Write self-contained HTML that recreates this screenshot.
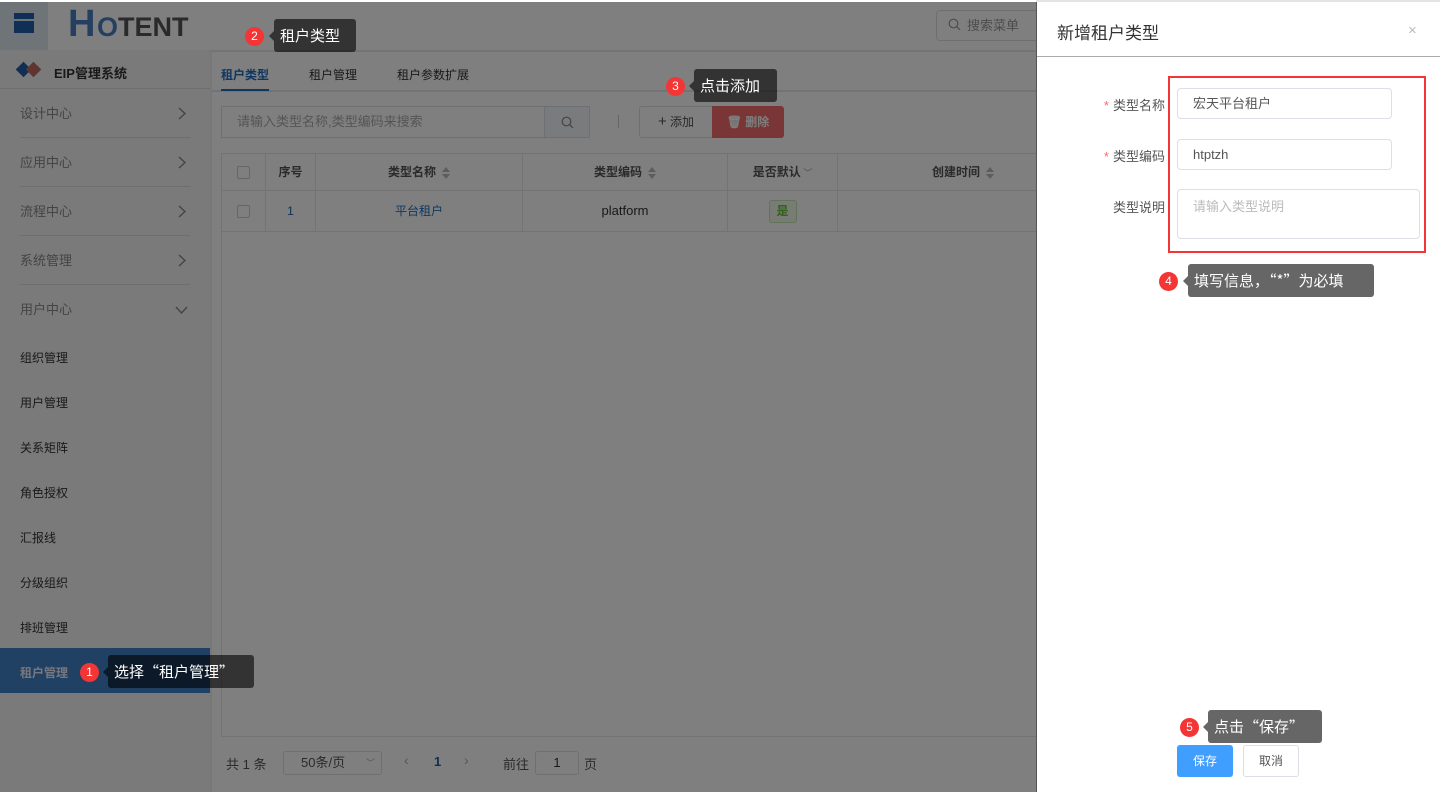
<!DOCTYPE html>
<html><head><meta charset="utf-8"><style>
*{box-sizing:border-box;margin:0;padding:0}
body{width:1440px;height:792px;overflow:hidden;position:relative;background:#fff;font-family:"Liberation Sans","Noto Sans CJK SC",sans-serif;font-size:12px;color:#333}
.a{position:absolute}
.side{left:0;top:50px;width:210px;height:742px;background:#f4f4f4}
.mi{position:absolute;left:20px;width:170px;color:#888;font-size:13px;height:49px;line-height:49px;border-bottom:1px solid #ddd}
.mi svg{position:absolute;right:4px;top:18px}
.si{position:absolute;left:20px;color:#333;font-size:12px}
.th{position:absolute;top:153px;height:38px;line-height:38px;text-align:center;font-weight:bold;color:#555;border-right:1px solid #e6e6e6}
.tr{position:absolute;top:191px;height:40px;line-height:40px;text-align:center;border-right:1px solid #e6e6e6}
.cb{display:inline-block;width:13px;height:13px;border:1px solid #ccc;border-radius:2px;background:#fff;vertical-align:middle}
.sort{display:inline-block;vertical-align:middle;margin-left:6px;width:8px;height:12px;position:relative}
.sort:before{content:"";position:absolute;top:0;left:0;border:4px solid transparent;border-bottom:5px solid #bbb;border-top:0}
.sort:after{content:"";position:absolute;bottom:0;left:0;border:4px solid transparent;border-top:5px solid #bbb;border-bottom:0}
.ov{left:0;top:0;width:1036px;height:792px;background:rgba(0,0,0,.5)}
.tip{position:absolute;background:rgba(0,0,0,.6);color:#fff;font-family:"Noto Sans CJK SC",sans-serif;font-size:15px;height:33px;line-height:33px;padding:0 6px;border-radius:3px;white-space:nowrap}
.tip:before{content:"";position:absolute;left:-5px;top:12px;border:5px solid transparent;border-right-color:rgba(0,0,0,.6);border-left:0}
.bd{position:absolute;width:19px;height:19px;border-radius:50%;background:#f33535;color:#fff;text-align:center;line-height:19px;font-size:12px}
.inp{position:absolute;border:1px solid #dcdfe6;border-radius:4px;background:#fff;font-size:13px;padding-left:15px;color:#555}
.lbl{position:absolute;right:275px;font-size:13px;color:#555}
.lbl b{color:#f56c6c;font-weight:normal;margin-right:4px}
</style></head><body>
<div class="a" style="left:0;top:0;width:1440px;height:1px;background:#fff"></div>
<div class="a" style="left:0;top:1px;width:48px;height:49px;background:#dfe8f2"></div>
<div class="a" style="left:14px;top:13px;width:20px;height:20px;background:#1f5ea8;border-top:4px solid #1f5ea8"><div style="margin-top:2px;height:2px;background:#dfe8f2"></div></div>
<div class="a" style="left:68px;top:4px;font-size:38px;font-weight:bold;color:#4a7fc0;line-height:40px">H</div>
<div class="a" style="left:97px;top:12px;font-size:27px;font-weight:bold;color:#555;letter-spacing:0px"><span style="color:#4a7fc0">O</span>TENT</div>
<div class="a" style="left:936px;top:10px;width:110px;height:31px;border:1px solid #ddd;border-radius:4px;color:#999;font-size:13px;line-height:29px;padding-left:30px">搜索菜单</div>
<svg class="a" style="left:948px;top:18px" width="13" height="13" viewBox="0 0 13 13"><circle cx="5.5" cy="5.5" r="4.3" fill="none" stroke="#999" stroke-width="1.2"/><path d="M8.7 8.7L12 12" stroke="#999" stroke-width="1.2"/></svg>
<div class="a" style="left:0;top:50px;width:1036px;height:2px;background:#e8e8e8"></div>
<div class="a side"></div>
<div class="a" style="left:18px;top:64px;width:11px;height:11px;background:#1f5ea8;transform:rotate(45deg)"></div>
<div class="a" style="left:28px;top:64px;width:11px;height:11px;background:#c0695e;transform:rotate(45deg)"></div>
<div class="a" style="left:54px;top:63px;font-size:13px;font-weight:bold;color:#333">EIP管理系统</div>
<div class="a" style="left:0;top:88px;width:210px;height:1px;background:#ddd"></div>
<div class="mi" style="top:89px">设计中心<svg width="8" height="13"><path d="M1 1l6 5.5L1 12" fill="none" stroke="#888" stroke-width="1.4"/></svg></div>
<div class="mi" style="top:138px">应用中心<svg width="8" height="13"><path d="M1 1l6 5.5L1 12" fill="none" stroke="#888" stroke-width="1.4"/></svg></div>
<div class="mi" style="top:187px">流程中心<svg width="8" height="13"><path d="M1 1l6 5.5L1 12" fill="none" stroke="#888" stroke-width="1.4"/></svg></div>
<div class="mi" style="top:236px">系统管理<svg width="8" height="13"><path d="M1 1l6 5.5L1 12" fill="none" stroke="#888" stroke-width="1.4"/></svg></div>
<div class="mi" style="top:285px;border:0">用户中心<svg width="13" height="8" style="top:21px;right:2px"><path d="M1 1l5.5 6L12 1" fill="none" stroke="#888" stroke-width="1.4"/></svg></div>
<div class="si" style="top:349px">组织管理</div>
<div class="si" style="top:394px">用户管理</div>
<div class="si" style="top:439px">关系矩阵</div>
<div class="si" style="top:484px">角色授权</div>
<div class="si" style="top:529px">汇报线</div>
<div class="si" style="top:574px">分级组织</div>
<div class="si" style="top:619px">排班管理</div>
<div class="a" style="left:0;top:648px;width:210px;height:45px;background:#4181c8"></div>
<div class="si" style="top:664px;color:#eef;font-weight:bold">租户管理</div>
<div class="a" style="left:210px;top:52px;width:2px;height:740px;background:#eee"></div>
<div class="a" style="left:221px;top:66px;font-size:12px;color:#1f6fc0;font-weight:bold">租户类型</div>
<div class="a" style="left:309px;top:66px;font-size:12px;color:#333">租户管理</div>
<div class="a" style="left:397px;top:66px;font-size:12px;color:#333">租户参数扩展</div>
<div class="a" style="left:212px;top:90px;width:824px;height:2px;background:#e4e7ed"></div>
<div class="a" style="left:221px;top:89px;width:48px;height:2px;background:#1f6fc0"></div>
<div class="a" style="left:221px;top:106px;width:324px;height:32px;border:1px solid #dcdfe6;color:#aaa;font-size:13px;line-height:30px;padding-left:15px;background:#fff">请输入类型名称,类型编码来搜索</div>
<div class="a" style="left:544px;top:106px;width:46px;height:32px;border:1px solid #dcdfe6;background:#f5f7fa"></div>
<svg class="a" style="left:561px;top:116px" width="13" height="13"><circle cx="5.5" cy="5.5" r="4.3" fill="none" stroke="#888" stroke-width="1.2"/><path d="M8.7 8.7L12 12" stroke="#888" stroke-width="1.2"/></svg>
<div class="a" style="left:618px;top:115px;width:1px;height:13px;background:#ccc"></div>
<div class="a" style="left:639px;top:106px;width:74px;height:32px;border:1px solid #dcdfe6;border-radius:3px 0 0 3px;background:#fff;font-size:12px;line-height:30px;text-align:center;color:#555"><span style="font-size:15px">+</span> 添加</div>
<div class="a" style="left:712px;top:106px;width:72px;height:32px;background:#f56c6c;border-radius:0 3px 3px 0;font-size:12px;line-height:32px;text-align:center;color:#fff;font-weight:bold">&#x1F5D1;&#xFE0E; 删除</div>
<div class="a" style="left:221px;top:153px;width:815px;height:584px;border:1px solid #e6e6e6;border-right:0"></div>
<div class="a" style="left:221px;top:190px;width:815px;height:1px;background:#e6e6e6"></div>
<div class="a" style="left:221px;top:231px;width:815px;height:1px;background:#e6e6e6"></div>
<div class="th" style="left:221px;width:45px"><span class="cb"></span></div>
<div class="th" style="left:266px;width:50px">序号</div>
<div class="th" style="left:316px;width:207px">类型名称<span class="sort"></span></div>
<div class="th" style="left:523px;width:205px">类型编码<span class="sort"></span></div>
<div class="th" style="left:728px;width:110px">是否默认<span style="font-size:9px;color:#999;font-weight:normal"> ﹀</span></div>
<div class="th" style="left:838px;width:250px;border:0">创建时间<span class="sort"></span></div>
<div class="tr" style="left:221px;width:45px"><span class="cb"></span></div>
<div class="tr" style="left:266px;width:50px;color:#1f5ea8">1</div>
<div class="tr" style="left:316px;width:207px;color:#1f6fc0">平台租户</div>
<div class="tr" style="left:523px;width:205px;font-size:13px">platform</div>
<div class="tr" style="left:728px;width:110px"><span style="display:inline-block;width:28px;height:23px;line-height:21px;background:#f0f9eb;border:1px solid #c2e7b0;color:#67c23a;border-radius:3px;font-weight:bold">是</span></div>
<div class="a" style="left:226px;top:754px;font-size:13px;color:#555">共 1 条</div>
<div class="a" style="left:283px;top:751px;width:99px;height:24px;border:1px solid #dcdfe6;border-radius:3px;font-size:13px;line-height:22px;padding-left:17px;color:#555">50条/页<span style="position:absolute;right:6px;color:#aaa;font-size:9px">﹀</span></div>
<div class="a" style="left:404px;top:752px;color:#aaa;font-size:14px">‹</div>
<div class="a" style="left:434px;top:754px;color:#1f5ea8;font-weight:bold;font-size:13px">1</div>
<div class="a" style="left:464px;top:752px;color:#aaa;font-size:14px">›</div>
<div class="a" style="left:503px;top:754px;font-size:13px;color:#555">前往</div>
<div class="a" style="left:535px;top:751px;width:44px;height:24px;border:1px solid #dcdfe6;border-radius:3px;text-align:center;line-height:22px;font-size:13px">1</div>
<div class="a" style="left:584px;top:754px;font-size:13px;color:#555">页</div>
<div class="a ov"></div>
<div class="a" style="left:0;top:0;width:1036px;height:2px;background:#fff"></div>
<div class="a" style="left:1036px;top:0;width:404px;height:792px;background:#fff;border-left:1px solid #555"></div>
<div class="a" style="left:1036px;top:0;width:404px;height:2px;background:#e4e4e4"></div>
<div class="a" style="left:1057px;top:23px;font-size:17px;color:#333;line-height:22px">新增租户类型</div>
<div class="a" style="left:1408px;top:22px;font-size:15px;color:#bbb">×</div>
<div class="a" style="left:1037px;top:56px;width:403px;height:1px;background:#aaa"></div>
<div class="lbl" style="top:95px"><b>*</b>类型名称</div>
<div class="lbl" style="top:146px"><b>*</b>类型编码</div>
<div class="lbl" style="top:197px">类型说明</div>
<div class="inp" style="left:1177px;top:88px;width:215px;height:31px;line-height:29px">宏天平台租户</div>
<div class="inp" style="left:1177px;top:139px;width:215px;height:31px;line-height:29px">htptzh</div>
<div class="inp" style="left:1177px;top:189px;width:243px;height:50px;padding-top:6px;color:#bbb">请输入类型说明</div>
<div class="a" style="left:1168px;top:76px;width:258px;height:177px;border:2px solid #f33535"></div>
<div class="a" style="left:1177px;top:745px;width:56px;height:32px;background:#409eff;border-radius:3px;color:#fff;text-align:center;line-height:32px;font-size:12px">保存</div>
<div class="a" style="left:1243px;top:745px;width:56px;height:32px;border:1px solid #dcdfe6;border-radius:3px;color:#555;text-align:center;line-height:30px;font-size:12px">取消</div>
<div class="bd" style="left:80px;top:663px">1</div>
<div class="tip" style="left:108px;top:655px;width:146px">选择“租户管理”</div>
<div class="bd" style="left:245px;top:27px">2</div>
<div class="tip" style="left:274px;top:19px;width:82px">租户类型</div>
<div class="bd" style="left:666px;top:77px">3</div>
<div class="tip" style="left:694px;top:69px;width:83px">点击添加</div>
<div class="bd" style="left:1159px;top:272px">4</div>
<div class="tip" style="left:1188px;top:264px;width:186px">填写信息，“*”为必填</div>
<div class="bd" style="left:1180px;top:718px">5</div>
<div class="tip" style="left:1208px;top:710px;width:114px">点击“保存”</div>
</body></html>
